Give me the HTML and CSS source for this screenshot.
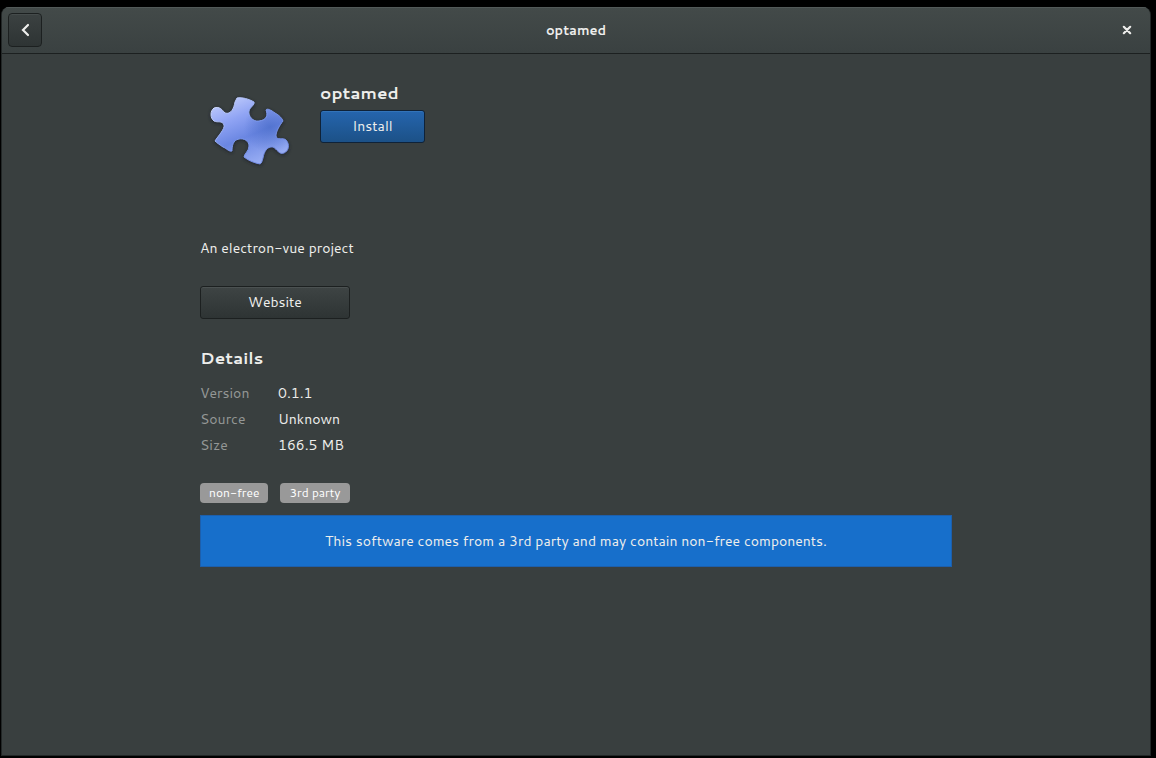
FILE: index.html
```html
<!DOCTYPE html>
<html lang="en">
<head>
<meta charset="utf-8">
<title>optamed</title>
<link rel="stylesheet" href="styles.css">
</head>
<body>
<div class="window">
  <header class="headerbar">
    <button class="back" type="button" aria-label="Back">
      <svg width="16" height="16" viewBox="0 0 16 16" aria-hidden="true"><path d="M11 3 6 8l5 5" fill="none" stroke="#eeeeec" stroke-width="2.2" stroke-linecap="round"/></svg>
    </button>
    <h1 class="title">optamed</h1>
    <button class="close" type="button" aria-label="Close">
      <svg width="16" height="16" viewBox="0 0 16 16" aria-hidden="true"><path d="M4.800 4.800l6.400 6.400M11.200 4.800l-6.400 6.400" fill="none" stroke="#eeeeec" stroke-width="2.2" stroke-linecap="round"/></svg>
    </button>
  </header>
  <main class="content">
    <section class="app">
      <svg class="app-icon" width="100" height="100" viewBox="0 0 100 100" aria-hidden="true">
        <defs>
          <linearGradient id="face" x1="32" y1="14" x2="62" y2="86" gradientUnits="userSpaceOnUse">
            <stop offset="0" stop-color="#c3cefc"/>
            <stop offset=".3" stop-color="#90a4f4"/>
            <stop offset=".58" stop-color="#6a86e2"/>
            <stop offset="1" stop-color="#9fb3f6"/>
          </linearGradient>
          <linearGradient id="rim" x1="20" y1="20" x2="75" y2="80" gradientUnits="userSpaceOnUse">
            <stop offset="0" stop-color="#d3ddff"/>
            <stop offset=".5" stop-color="#7c99ef"/>
            <stop offset="1" stop-color="#7189dd"/>
          </linearGradient>
          <radialGradient id="deep" cx="70" cy="47" r="26" gradientUnits="userSpaceOnUse">
            <stop offset="0" stop-color="#4468c4" stop-opacity=".6"/>
            <stop offset="1" stop-color="#4468c4" stop-opacity="0"/>
          </radialGradient>
          <filter id="shade" x="-20%" y="-20%" width="140%" height="140%"><feGaussianBlur stdDeviation="1.5"/></filter>
          <path id="piece" d="M37 18 C42 17 49 19 54 22 C55 25 50 27 49 31 C48 36 53 42 59 41 C67 40 68 35 66 30 C67 28 71 30 75 33 C79 35 82 38 83 41 C80 45 76 51 76 56 C77 61 83 57 86 60 C90 64 89 71 84 73 C79 75 77 69 73 67 C67 66 64 72 63 78 C62 81 62 83 60 84 C55 83 49 81 44 77 C44 74 49 71 49 66 C49 61 44 58 39 59 C33 60 32 66 32 71 C29 72 26 68 23 67 C20 65 17 63 15 61 C18 56 25 49 24 45 C22 40 18 43 14 41 C10 38 10 31 14 28 C20 26 22 30 25 33 C31 35 34 28 35 22 Z"/>
        </defs>
        <use href="#piece" y="1" fill="#161b26" stroke="#161b26" stroke-width="2" opacity=".6" filter="url(#shade)"/>
        <use href="#piece" fill="url(#face)"/>
        <use href="#piece" fill="url(#deep)"/>
        <use href="#piece" fill="none" stroke="url(#rim)" stroke-width="1"/>
      </svg>
      <div class="app-info">
        <h2 class="app-name">optamed</h2>
        <button class="button install" type="button">Install</button>
      </div>
    </section>
    <p class="summary">An electron-vue project</p>
    <button class="button website" type="button">Website</button>
    <h2 class="heading">Details</h2>
    <dl class="details">
      <dt>Version</dt><dd>0.1.1</dd>
      <dt>Source</dt><dd>Unknown</dd>
      <dt>Size</dt><dd>166.5 MB</dd>
    </dl>
    <div class="tags">
      <span class="tag">non-free</span>
      <span class="tag">3rd party</span>
    </div>
    <p class="notice">This software comes from a 3rd party and may contain non-free components.</p>
  </main>
</div>
</body>
</html>
```
FILE: styles.css
```css
* { box-sizing: border-box; }

body {
  margin: 0;
  min-height: 100vh;
  padding: 7px 5px 2px 1px;
  display: flex;
  background: #000;
  color: #eeeeec;
  font: 14px/20px "Cantarell", "Noto Sans", sans-serif;
}

h1, h2, p, dl, dd { margin: 0; }

button {
  font: inherit;
  color: inherit;
  padding: 0;
}

.window {
  flex: 1;
  border: 1px solid #222727;
  border-top: 0;
  border-radius: 8px 8px 0 0;
  overflow: hidden;
  background: #393f3f;
}

.headerbar {
  display: grid;
  grid-template-columns: 34px 1fr 34px;
  align-items: center;
  height: 47px;
  padding: 0 6px;
  border-bottom: 1px solid #1c2020;
  background: linear-gradient(#434a49, #3a4141);
  box-shadow: inset 0 1px #525958;
}

.title {
  font-size: 13px;
  line-height: 20px;
  font-weight: 700;
  text-align: center;
}

.back, .close {
  display: flex;
  align-items: center;
  justify-content: center;
  height: 34px;
}

.back {
  border: 1px solid #1c2020;
  border-radius: 4px;
  background: linear-gradient(#3b4141, #2e3434);
  box-shadow: inset 0 1px #454b4b;
}

.close {
  border: 0;
  background: none;
}

.content {
  width: 100%;
  max-width: 792px;
  margin: 0 auto;
  padding: 26px 20px;
}

.app {
  display: flex;
  gap: 20px;
  min-height: 158px;
}

.app-name, .heading {
  font-size: 17px;
  line-height: 24px;
  font-weight: 700;
}

.button {
  display: block;
  height: 33px;
  padding-bottom: 2px;
  border: 1px solid #1c2020;
  border-radius: 3px;
  background: linear-gradient(#3e4444, #2e3434);
  box-shadow: inset 0 1px #4b5151;
}

.install {
  width: 105px;
  margin-top: 6px;
  border-color: #0f2238;
  background: linear-gradient(#2565ae, #1c5187);
  box-shadow: inset 0 1px #3273b9;
}

.website {
  width: 150px;
  margin-top: 28px;
}

.heading { margin-top: 26px; }

.details {
  display: grid;
  grid-template-columns: 58px 1fr;
  gap: 6px 20px;
  margin-top: 14px;
}

.details dt { color: #949796; }

.tags {
  display: flex;
  gap: 12px;
  margin-top: 28px;
}

.tag {
  padding: 0 9px;
  border-radius: 4px;
  background: #999;
  color: #fff;
  font-size: 12px;
  line-height: 20px;
}

.notice {
  margin-top: 12px;
  padding: 15px;
  border: 1px solid #1d5fac;
  background: #176fcb;
  text-align: center;
}
```
